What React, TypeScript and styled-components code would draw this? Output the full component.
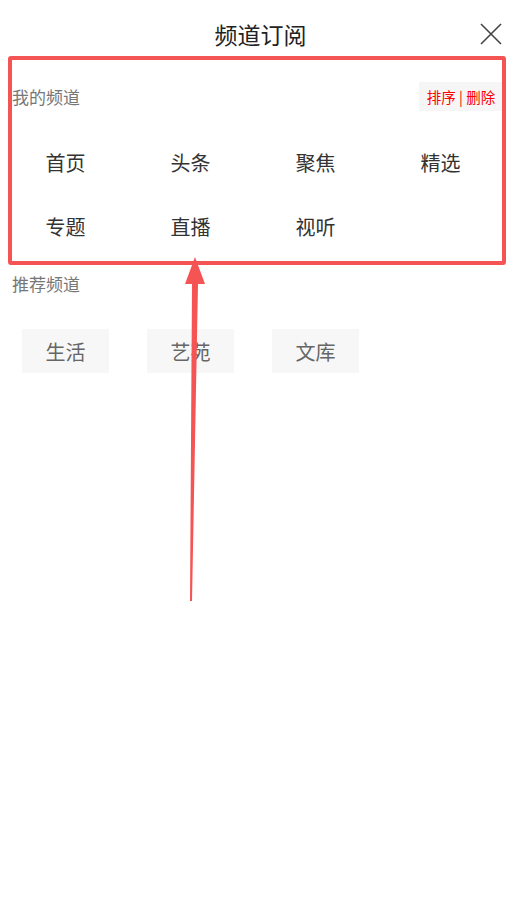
import React from "react";
import styled, { createGlobalStyle } from "styled-components";

const Global = createGlobalStyle`
  html, body {
    margin: 0;
    padding: 0;
    background: #fff;
    font-family: "Noto Sans CJK SC", "Noto Sans", sans-serif;
  }
`;

const Page = styled.div`
  position: relative;
  width: 521px;
  min-height: 906px;
  background: #fff;
`;

const Header = styled.header`
  height: 72px;
  box-sizing: border-box;
  padding-bottom: 4px;
  display: grid;
  grid-template-columns: 1fr auto 1fr;
  align-items: center;
`;

const Title = styled.h1`
  grid-column: 2;
  margin: 0;
  font-size: 23px;
  font-weight: 400;
  color: #222;
  line-height: 1;
`;

const Close = styled.button`
  grid-column: 3;
  justify-self: end;
  margin-right: 19px;
  width: 22px;
  height: 22px;
  padding: 0;
  border: 0;
  background: none;
  display: flex;
`;

const SectionHead = styled.div<{ $top: number }>`
  display: flex;
  align-items: center;
  justify-content: space-between;
  margin-top: ${(p) => p.$top}px;
  padding-left: 12px;
  height: 29px;
`;

const SectionTitle = styled.span`
  font-size: 17px;
  color: #777;
`;

const Action = styled.span`
  height: 29px;
  width: 84px;
  margin-right: 18px;
  background: #f6f6f6;
  color: #ff0000;
  font-size: 14.5px;
  display: flex;
  align-items: center;
  justify-content: center;
`;

const Grid = styled.div<{ $top: number; $row: number }>`
  margin: ${(p) => p.$top}px 0 0 3px;
  width: 500px;
  display: grid;
  grid-template-columns: repeat(4, 125px);
  grid-auto-rows: ${(p) => p.$row}px;
  align-items: center;
  justify-items: center;
`;

const Channel = styled.span`
  font-size: 20px;
  color: #333;
`;

const Tag = styled.span`
  width: 87px;
  height: 44px;
  background: #f7f7f7;
  color: #666;
  font-size: 20px;
  display: flex;
  align-items: center;
  justify-content: center;
`;

const Frame = styled.div`
  position: absolute;
  left: 8px;
  top: 56px;
  width: 498px;
  height: 209px;
  box-sizing: border-box;
  border: 4px solid #f55454;
  border-radius: 3px;
  pointer-events: none;
`;

const Arrow = styled.svg`
  position: absolute;
  left: 0;
  top: 0;
  pointer-events: none;
`;

const mine = ["首页", "头条", "聚焦", "精选", "专题", "直播", "视听"];
const recommend = ["生活", "艺苑", "文库"];

export default function App() {
  return (
    <Page>
      <Global />
      <Header>
        <Title>频道订阅</Title>
        <Close aria-label="关闭">
          <svg width="22" height="22" viewBox="0 0 22 22">
            <path d="M1 1L21 21M21 1L1 21" stroke="#444" strokeWidth="1.6" fill="none" />
          </svg>
        </Close>
      </Header>

      <SectionHead $top={10}>
        <SectionTitle>我的频道</SectionTitle>
        <Action>排序 | 删除</Action>
      </SectionHead>
      <Grid $top={19} $row={64}>
        {mine.map((c) => (
          <Channel key={c}>{c}</Channel>
        ))}
      </Grid>

      <SectionHead $top={11}>
        <SectionTitle>推荐频道</SectionTitle>
      </SectionHead>
      <Grid $top={31} $row={44}>
        {recommend.map((c) => (
          <Tag key={c}>{c}</Tag>
        ))}
      </Grid>

      <Frame />
      <Arrow width="521" height="906">
        <polygon points="195,257 205,284 198,284 192,601 190,601 192,284 185,284" fill="#f55454" />
      </Arrow>
    </Page>
  );
}
